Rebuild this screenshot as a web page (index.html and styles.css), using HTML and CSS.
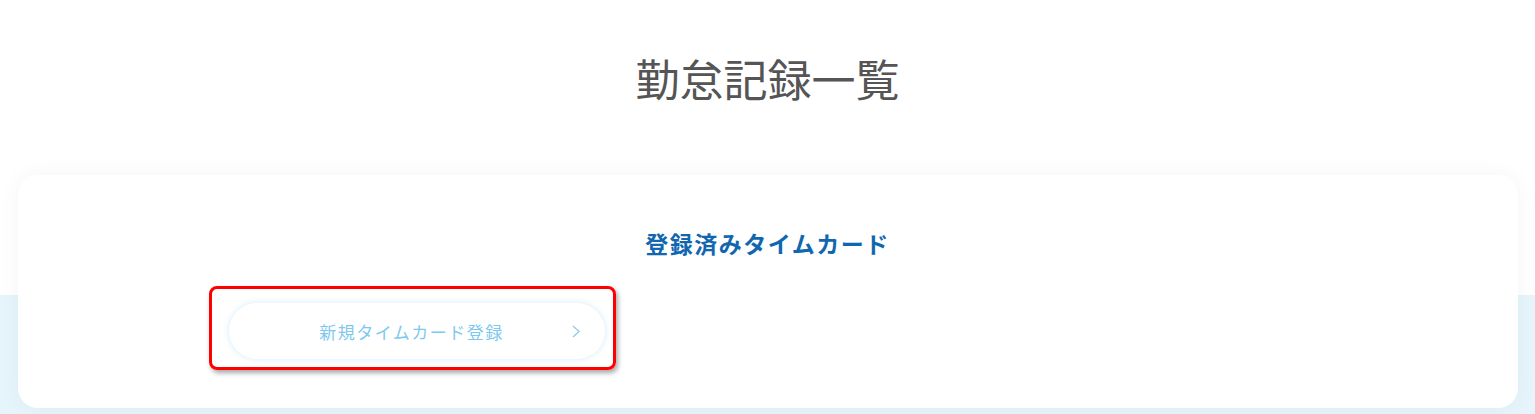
FILE: index.html
```html
<!DOCTYPE html>
<html lang="ja">
<head>
    <meta charset="UTF-8">
    <meta name="viewport" content="width=device-width, initial-scale=1.0">
    <title>勤怠記録一覧</title>
    <link rel="stylesheet" href="styles.css">
</head>
<body>
    <header class="page-header">
        <h1>勤怠記録一覧</h1>
    </header>

    <main class="page-main">
        <section class="card">
            <h2 class="card-title">登録済みタイムカード</h2>
            <div class="card-list">
                <div class="highlight">
                    <a class="pill-button" href="#">
                        <span class="pill-label">新規タイムカード登録</span>
                        <svg class="chevron" width="8" height="13" viewBox="0 0 8 13">
                            <polyline points="1,1 7,6.5 1,12" fill="none" stroke="#8ccbed" stroke-width="1.3"/>
                        </svg>
                    </a>
                </div>
            </div>
        </section>
    </main>
</body>
</html>
```

FILE: styles.css
```css
body {
    font-family: "Noto Sans CJK JP", "Noto Sans", sans-serif;
    margin: 0;
    padding: 0;
    background-color: #fff;
}
.page-header {
    padding: 46px 0 65px;
    text-align: center;
}
.page-header h1 {
    margin: 0;
    font-size: 44px;
    line-height: 64px;
    font-weight: 400;
    color: #555;
}
.page-main {
    padding: 0 0 6px;
    background: linear-gradient(#fff 120px, #e6f4fb 120px);
}
.card {
    max-width: 1500px;
    margin: 0 auto;
    height: 233px;
    box-sizing: border-box;
    padding-top: 52px;
    background: #fff;
    border-radius: 20px;
    box-shadow: 0 0 24px rgba(0, 0, 0, 0.045);
}
.card-title {
    margin: 0 0 27px;
    text-align: center;
    font-size: 23px;
    line-height: 32px;
    font-weight: 700;
    letter-spacing: 1.5px;
    color: #1166b0;
}
.card-list {
    display: flex;
    max-width: 1118px;
    margin: 0 auto;
}
.highlight {
    padding: 14px 8px 8px 17px;
    border: 3px solid #f00;
    border-radius: 8px;
    box-shadow: 2px 3px 5px rgba(0, 0, 0, 0.35);
}
.pill-button {
    display: grid;
    grid-template-columns: 1fr auto 1fr;
    align-items: center;
    width: 376px;
    height: 56px;
    box-sizing: border-box;
    padding: 0 25px 0 15px;
    background: #fff;
    border-radius: 28px;
    box-shadow: 0 0 6px rgba(150, 210, 245, 0.45);
    text-decoration: none;
}
.pill-label {
    grid-column: 2;
    font-size: 17px;
    letter-spacing: 1.5px;
    color: #7ec8ef;
}
.chevron {
    grid-column: 3;
    justify-self: end;
}
```
